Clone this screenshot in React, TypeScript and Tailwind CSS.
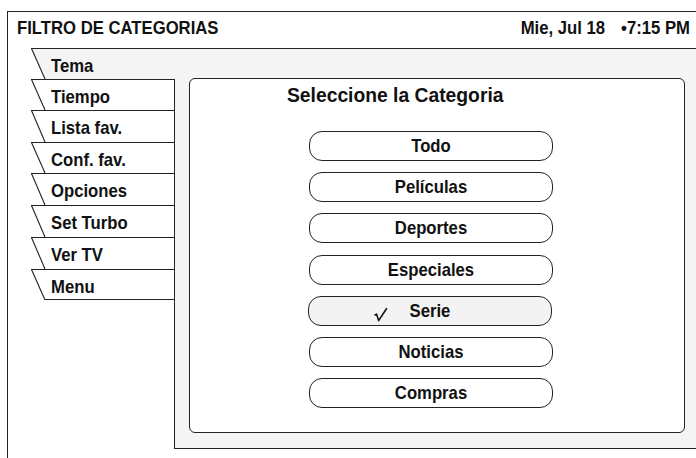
import React from 'react';

const FONT = { fontFamily: "'Liberation Sans', Arial, sans-serif" };

const TABS: { label: string; h: number }[] = [
  { label: 'Tema', h: 31 },
  { label: 'Tiempo', h: 31 },
  { label: 'Lista fav.', h: 32 },
  { label: 'Conf. fav.', h: 31 },
  { label: 'Opciones', h: 32 },
  { label: 'Set Turbo', h: 32 },
  { label: 'Ver TV', h: 32 },
  { label: 'Menu', h: 31 },
];

const CATEGORIES = ['Todo', 'Películas', 'Deportes', 'Especiales', 'Serie', 'Noticias', 'Compras'];
const SELECTED = 'Serie';

// the TV font is a touch narrower than Arial, so stretch the glyphs a bit vertically
function Tall({ children }: { children: React.ReactNode }) {
  return <span className="inline-block scale-y-[1.11]">{children}</span>;
}

function Tab({ label, h, active, last }: { label: string; h: number; active: boolean; last: boolean }) {
  const w = active ? 144 : 143;
  return (
    <div className={`relative ml-[23px] ${active ? 'z-10 w-[144px]' : 'w-[143px]'}`} style={{ height: h }}>
      <svg className="absolute inset-0 overflow-visible" width={w} height={h}>
        {active && <polygon points={`0,0 ${w},0 ${w},${h} 14,${h}`} fill="#f4f4f4" />}
        <line x1="0" y1="0.5" x2={w} y2="0.5" stroke="#222" strokeWidth="1.2" />
        <line x1="0.5" y1="0.5" x2="14" y2={h} stroke="#222" strokeWidth="1.1" />
        {last && <line x1="14" y1={h - 0.5} x2={w} y2={h - 0.5} stroke="#222" strokeWidth="1.2" />}
      </svg>
      <div className="relative pl-[20px] pt-[8px] text-[16.7px] font-bold leading-[20px] text-[#111]">
        <Tall>{label}</Tall>
      </div>
    </div>
  );
}

function CategoryButton({ label, selected }: { label: string; selected: boolean }) {
  return (
    <div
      className={`relative flex h-[30px] w-[244px] items-center justify-center rounded-[13px] border border-[#222] text-[16.7px] font-bold leading-[20px] text-[#111] ${
        selected ? 'ml-[118px] bg-[#f3f3f3]' : 'ml-[119px] bg-white'
      }`}
    >
      {selected && (
        <svg className="absolute left-[64px] top-[10px]" width="15" height="15" viewBox="0 0 15 15">
          <path d="M1.5 8.2 L3.6 7.2 L5.6 13.6 L13.8 1.2" fill="none" stroke="#111" strokeWidth="1.6" strokeLinejoin="round" />
        </svg>
      )}
      <Tall>{label}</Tall>
    </div>
  );
}

export default function App() {
  return (
    <div className="h-[458px] w-[696px] overflow-hidden bg-white" style={FONT}>
      <div className="ml-[7px] mt-[11px] h-[447px] border-l border-t border-[#222]">
        <div className="flex h-[36px] justify-between pl-[9px] pr-[6px] pt-[7px] text-[16.7px] font-bold leading-[20px] text-[#111]">
          <Tall>FILTRO DE CATEGORIAS</Tall>
          <span className="flex gap-[16px]">
            <Tall>Mie, Jul 18</Tall>
            <Tall>•7:15 PM</Tall>
          </span>
        </div>
        <div className="flex">
          <div className="w-[166px] shrink-0">
            {TABS.map((t, i) => (
              <Tab key={t.label} label={t.label} h={t.h} active={i === 0} last={i === TABS.length - 1} />
            ))}
          </div>
          <div className="h-[401px] flex-1 border-b border-l border-t border-[#222] bg-[#f4f4f4] pb-[15px] pl-[14px] pr-[11px] pt-[29px]">
            <div className="h-full rounded-[6px] border border-[#222] bg-white pt-[5px]">
              <div className="pl-[97px] text-[19.3px] font-bold leading-[24px] text-[#111]">
                <span className="inline-block scale-y-[1.06]">Seleccione la Categoria</span>
              </div>
              <div className="mt-[23px] flex flex-col gap-[11.2px]">
                {CATEGORIES.map((c) => (
                  <CategoryButton key={c} label={c} selected={c === SELECTED} />
                ))}
              </div>
            </div>
          </div>
        </div>
      </div>
    </div>
  );
}
